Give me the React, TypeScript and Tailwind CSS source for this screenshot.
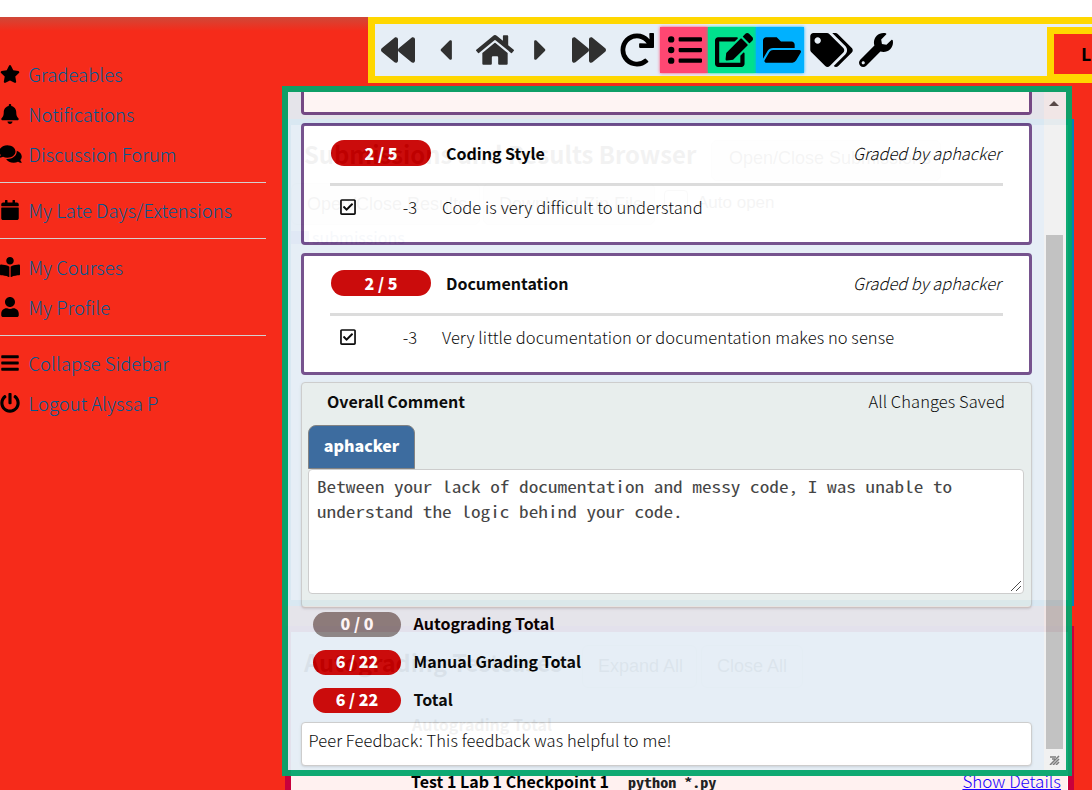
import React from 'react';
import {
  FaBackward, FaCaretLeft, FaHome, FaCaretRight, FaForward, FaRedo, FaListUl, FaEdit, FaFolderOpen,
  FaTags, FaWrench, FaStar, FaBell, FaComments, FaCalendar, FaBookReader, FaUser, FaBars, FaPowerOff,
  FaRegCheckSquare,
} from 'react-icons/fa';

const groups = [
  {
    cls: 'pb-2',
    items: [
      { icon: FaStar, label: 'Gradeables', cls: 'w-5 h-[18px]' },
      { icon: FaBell, label: 'Notifications', cls: 'w-5 h-5' },
      { icon: FaComments, label: 'Discussion Forum', cls: 'w-[23px] h-5' },
    ],
  },
  {
    cls: 'border-t border-[#d5d0d0] pt-[7px] pb-2',
    items: [{ icon: FaCalendar, label: 'My Late Days/Extensions', cls: 'w-5 h-5' }],
  },
  {
    cls: 'border-t border-[#d5d0d0] pt-2 pb-2',
    items: [
      { icon: FaBookReader, label: 'My Courses', cls: 'w-5 h-5' },
      { icon: FaUser, label: 'My Profile', cls: 'w-5 h-5' },
    ],
  },
  {
    cls: 'border-t border-[#d5d0d0] pt-[7px]',
    items: [
      { icon: FaBars, label: 'Collapse Sidebar', cls: 'w-5 h-5' },
      { icon: FaPowerOff, label: 'Logout Alyssa P', cls: 'w-5 h-5' },
    ],
  },
];

function Sidebar() {
  return (
    <nav className="w-[266px] pt-[37px]">
      {groups.map((group, i) => (
        <div key={i} className={group.cls}>
          {group.items.map(({ icon: Icon, label, cls }) => (
            <div key={label} className="flex h-10 items-center whitespace-nowrap">
              <span className="flex w-5 shrink-0 justify-center text-black">
                <Icon className={`${cls} shrink-0`} />
              </span>
              <span className="ml-[8.5px] text-[18.5px] leading-6 font-light text-[#005a94]">{label}</span>
            </div>
          ))}
        </div>
      ))}
    </nav>
  );
}

function Toolbar() {
  return (
    <div className="absolute top-[17px] left-[368px] flex h-[66px] w-[724px] items-center border-y-[7px] border-l-[7px] border-[#ffd700] bg-[#e6eef6] pb-px text-black">
      <div className="flex shrink-0 items-center pl-[6px] text-[#303030]">
        <FaBackward className="h-[34px] w-[34px] shrink-0" />
        <FaCaretLeft className="ml-6 h-[34px] w-[13px] shrink-0" />
        <FaHome className="ml-6 h-[34px] w-[38px] shrink-0" />
        <FaCaretRight className="ml-5 h-[34px] w-[13px] shrink-0" />
        <FaForward className="ml-[25px] h-[34px] w-[34px] shrink-0" />
      </div>
      <FaRedo className="ml-[14px] h-[34px] w-[34px] shrink-0" />
      <div className="ml-[6px] flex shrink-0">
        <span className="flex h-[46px] w-12 items-center justify-center bg-[#ff4772] pl-px shadow-[0_0_3px_#ff4772]"><FaListUl className="h-[34px] w-[34px]" /></span>
        <span className="flex h-[46px] w-12 items-center justify-center bg-[#00e08d] pl-[3px] shadow-[0_0_3px_#00e08d]"><FaEdit className="h-[34px] w-[38px] shrink-0" /></span>
        <span className="flex h-[46px] w-12 items-center justify-center bg-[#00b1ff] pl-[3px] shadow-[0_0_3px_#00b1ff]"><FaFolderOpen className="h-[34px] w-[38px] shrink-0" /></span>
      </div>
      <FaTags className="ml-[6px] h-[34px] w-[43px] shrink-0" />
      <FaWrench className="ml-[6px] h-[34px] w-[34px] shrink-0" />
      <div className="mt-[3px] ml-auto flex h-[54px] w-[45px] shrink-0 items-center self-start overflow-hidden border-t-[7px] border-b-[7px] border-l-[7px] border-[#ffd700] bg-[#f62b1a] pl-[27px] font-['Open_Sans',sans-serif] text-[18px] leading-6 font-bold">
        L
      </div>
    </div>
  );
}

function GhostButton({ children, className }: { children: React.ReactNode; className: string }) {
  return (
    <span className={`flex shrink-0 items-center rounded-md border border-[#e0e0e0] bg-[#fafafa] font-['Liberation_Sans',sans-serif] text-[18px] whitespace-nowrap text-[#333] ${className}`}>
      {children}
    </span>
  );
}

function Results() {
  return (
    <div className="absolute top-[119px] left-[285px] w-[789px]">
      <section className="h-[487px] border-[6px] border-[#0880b8] bg-white">
        <div className="flex h-[58px] items-center pl-[13px]">
          <h2 className="w-[407px] text-[23.8px] leading-8 font-bold whitespace-nowrap">Submissions and Results Browser</h2>
          <GhostButton className="mt-3 h-[41px] w-[230px] pb-1 pl-[17px]">Open/Close Submissions</GhostButton>
        </div>
        <div className="flex h-[42px] items-center">
          <GhostButton className="h-[42px] w-[189px] pl-[15px]">Open/Close Results</GhostButton>
          <GhostButton className="ml-[3px] h-[42px] w-[172px] pl-[15px]">Download Zip File</GhostButton>
          <span className="mb-1 ml-[9px] h-6 w-6 rounded border border-[#999]" />
          <span className="mb-[2px] ml-[9px] font-['Liberation_Sans',sans-serif] text-[17px] text-[#333]">Auto open</span>
        </div>
        <div className="flex h-6 items-center gap-[3px]">
          <span className="h-[13px] w-[18px] bg-[#8888ee]" />
          <span className="pb-px text-[16px] leading-5 text-[#5577bb]">submissions</span>
        </div>
      </section>
      <section className="mt-5 h-[164px] overflow-hidden border-x-[6px] border-t-[6px] border-[#c8003c] bg-white">
        <div className="flex h-[68px] items-center pl-[13px]">
          <h2 className="w-[278px] pb-2 text-[23.5px] leading-8 font-bold whitespace-nowrap">Autograding Testcases</h2>
          <GhostButton className="h-[43px] w-[115px] pl-[15px]">Expand All</GhostButton>
          <GhostButton className="ml-1 h-[43px] w-[102px] pl-[15px]">Close All</GhostButton>
        </div>
        <div className="pt-3 pl-[121px] text-[16px] leading-6 font-bold">Autograding Total</div>
        <div className="mt-[26px] mr-[1px] flex h-10 items-start bg-[#fff1f0] pt-[7px] pl-[120px] whitespace-nowrap">
          <b className="w-[217px] text-[16px] leading-6">Test 1 Lab 1 Checkpoint 1</b>
          <b className="origin-left scale-x-[1.236] pt-[2px] font-['Noto_Sans_Mono_CJK_SC','Liberation_Mono',monospace] text-[13px] leading-6 text-[#222]">python *.py</b>
          <a className="mr-[6px] ml-auto text-[17px] leading-6 font-light text-[#1a00ff] underline decoration-1 underline-offset-[1px]">Show Details</a>
        </div>
      </section>
    </div>
  );
}

function ScoreCard({ title, note }: { title: string; note: string }) {
  return (
    <div className="h-[122px] rounded border-[3px] border-[#6f4a89] bg-white px-[26px] pt-[14px]">
      <div className="flex h-[43px] items-start">
        <span className="ml-[1px] flex h-[26px] w-[100px] items-center justify-center rounded-full bg-[#c90000] pb-px text-[16px] leading-6 font-black text-white">2 / 5</span>
        <b className="ml-[15px] text-[16px] leading-[26px]">{title}</b>
        <i className="mr-[2px] ml-auto text-[16.4px] leading-[26px] font-light">Graded by aphacker</i>
      </div>
      <div className="h-[3px] bg-[#dbdbdb]" />
      <div className="flex h-[42px] items-center text-[16.5px] leading-6 font-light">
        <FaRegCheckSquare className="ml-[9px] h-[18px] w-[18px]" />
        <span className="w-[60px] text-right">-3</span>
        <span className="ml-[25px] tracking-[0.08px]">{note}</span>
      </div>
    </div>
  );
}

const totals = [
  { score: '0 / 0', label: 'Autograding Total', color: 'bg-[#888080]' },
  { score: '6 / 22', label: 'Manual Grading Total', color: 'bg-[#c90000]' },
  { score: '6 / 22', label: 'Total', color: 'bg-[#c90000]' },
];

function GradePanel() {
  return (
    <div className="absolute top-[86px] left-[282px] flex h-[690px] w-[790px] overflow-hidden border-[6px] border-[#03a66c] bg-[#e5eef6] opacity-95">
      <div className="w-[756px] pr-3 pl-[13px]">
        <div className="h-[23px] w-[731px] rounded-b border-x-[3px] border-b-[3px] border-[#6f4a89] bg-white" />
        <div className="mt-2 w-[731px]"><ScoreCard title="Coding Style" note="Code is very difficult to understand" /></div>
        <div className="mt-2 w-[731px]"><ScoreCard title="Documentation" note="Very little documentation or documentation makes no sense" /></div>
        <div className="mt-[7px] h-[226px] w-[731px] rounded border border-[#cbcbcb] bg-[#e7eeed] px-[6px] shadow-sm">
          <div className="flex h-[42px] items-center justify-between pr-5 pb-[6px] pl-[19px] text-[16px] leading-6">
            <b>Overall Comment</b>
            <span className="text-[16.5px] font-light tracking-[0.08px]">All Changes Saved</span>
          </div>
          <div className="flex h-11 w-[107px] items-center justify-center rounded-t-lg border border-[#7d7d7d] bg-[#33659a] pb-1 text-[16px] font-black text-white">aphacker</div>
          <div className="relative h-[125px] w-[716px] rounded border border-[#cbcbcb] bg-white px-2 pt-1 whitespace-nowrap">
            <p className="w-fit origin-left scale-x-[1.203] font-['Noto_Sans_Mono_CJK_SC','Liberation_Mono',monospace] text-[16px] leading-[24.5px] font-light text-[#3c3c3c]">
              Between your lack of documentation and messy code, I was unable to<br />
              understand the logic behind your code.
            </p>
            <svg className="absolute right-px bottom-px h-3 w-3" viewBox="0 0 12 12" stroke="#444" strokeWidth="1"><path d="M1 11L11 1M6 11L11 6" /></svg>
          </div>
        </div>
        <div className="mt-1 ml-3 flex flex-col gap-[13px]">
          {totals.map((t) => (
            <div key={t.label} className="flex h-[25px] items-center text-[16px] leading-6 font-bold">
              <span className={`mr-[12px] flex h-[25px] w-[88px] items-center justify-center rounded-full pb-[3px] font-black text-white ${t.color}`}>{t.score}</span>
              <span className="pb-[3px] pl-[0.5px] tracking-[0.04px]">{t.label}</span>
            </div>
          ))}
        </div>
        <div className="mt-[9px] h-11 w-[731px] rounded border border-[#cbcbcb] bg-white pt-[5px] pl-[6.5px] text-[16.5px] leading-6 font-light tracking-[0.08px] shadow-sm">
          Peer Feedback: This feedback was helpful to me!
        </div>
      </div>
      <div className="flex w-[22px] flex-col bg-[#f1f1f1]">
        <svg className="mt-2 ml-[5px] h-2 w-[10px] shrink-0" viewBox="0 0 10 8"><path d="M0 6L5 1L10 6Z" fill="#504a4a" /></svg>
        <div className="mt-[127px] ml-[2px] h-[514px] w-[17px] shrink-0 bg-[#bfbfbf]" />
        <svg className="mt-[6px] ml-[5px] h-[10px] w-[11px] shrink-0" viewBox="0 0 11 10" fill="none" stroke="#777" strokeWidth="1.5"><path d="M1 2H7M10 1L1 10M10 4L4 10M10 7L7 10M3 4H6" /></svg>
      </div>
    </div>
  );
}

export default function App() {
  return (
    <div className="relative h-[790px] w-[1092px] overflow-hidden bg-[#f62b1a] font-['Noto_Sans_CJK_SC',sans-serif] text-black">
      <header className="h-[17px] bg-white" />
      <div className="h-[773px] bg-[linear-gradient(#d04838,#f62b1a_14px)]"><Sidebar /></div>
      <Results />
      <GradePanel />
      <Toolbar />
    </div>
  );
}
